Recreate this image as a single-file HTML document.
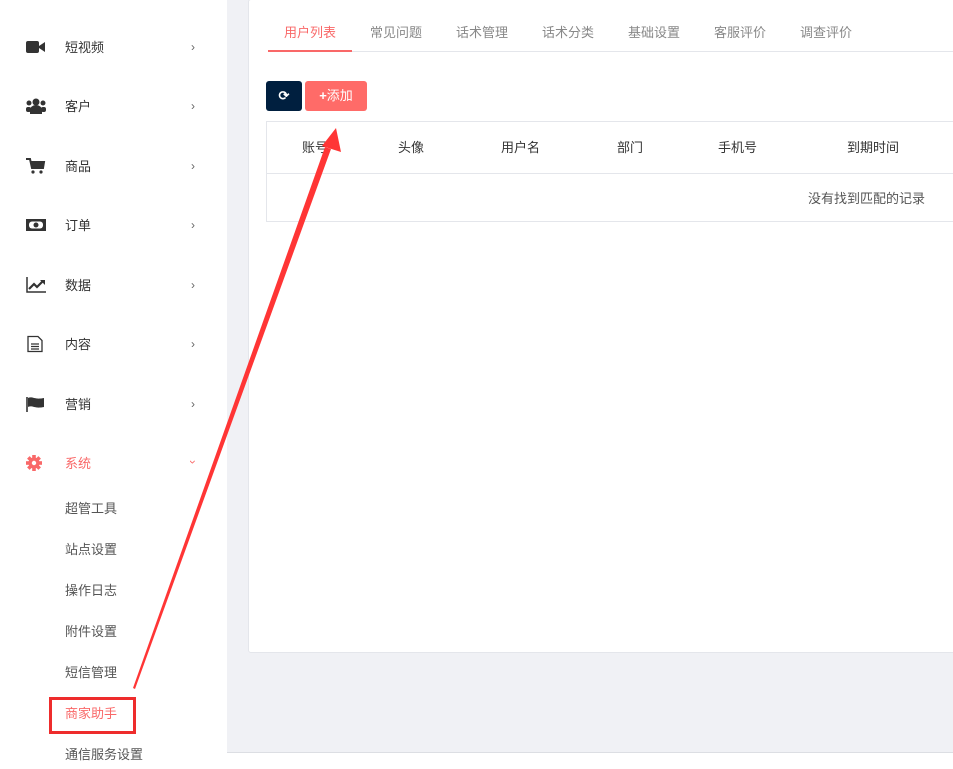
<!DOCTYPE html>
<html><head><meta charset="utf-8"><style>
*{margin:0;padding:0;box-sizing:border-box}
body{width:953px;height:769px;overflow:hidden;background:#f0f1f5;font-family:"Liberation Sans","Noto Sans CJK SC",sans-serif;position:relative}
.side{position:absolute;left:0;top:0;width:227px;height:769px;background:#fff}
.it{position:absolute;left:0;width:227px;height:20px;font-size:13px;color:#333}
.it .ic{position:absolute;left:26px;top:2px;width:20px;height:16px}
.it .t{position:absolute;left:65px;top:0}
.it .ar{position:absolute;left:191px;top:3px;color:#666;font-size:12px}
.sub{position:absolute;left:65px;font-size:13px;color:#555}
.card{position:absolute;left:248px;top:-1px;width:720px;height:654px;background:#fff;border-radius:3px;border:1px solid #e4e6eb}
.tabs{position:absolute;left:268px;top:19px;font-size:13px;color:#888}
.tabs span{position:absolute;top:3px;white-space:nowrap}
.foot{position:absolute;left:227px;top:752px;width:726px;height:17px;background:#fff;border-top:1px solid #dcdee3}
</style></head><body>
<div class="side">
<div class="it" style="top:37px"><svg class="ic" viewBox="0 0 20 16"><rect x="0" y="2" width="13" height="12" rx="2" fill="#333"/><path d="M13 7l6-4v10l-6-4z" fill="#333"/></svg><span class="t">短视频</span><span class="ar">›</span></div>
<div class="it" style="top:96px"><svg class="ic" viewBox="0 0 20 16"><circle cx="10" cy="4" r="3.5" fill="#333"/><circle cx="3" cy="5" r="2.5" fill="#333"/><circle cx="17" cy="5" r="2.5" fill="#333"/><path d="M4 16v-4a6 5 0 0112 0v4z" fill="#333"/><rect x="0" y="9" width="5" height="5" rx="2" fill="#333"/><rect x="15" y="9" width="5" height="5" rx="2" fill="#333"/></svg><span class="t">客户</span><span class="ar">›</span></div>
<div class="it" style="top:156px"><svg class="ic" viewBox="0 0 20 16"><path d="M0 1h4l2 9h11l1-6H5" fill="none" stroke="#333" stroke-width="2"/><rect x="5" y="4" width="12" height="5" fill="#333"/><circle cx="7" cy="14" r="1.6" fill="#333"/><circle cx="15" cy="14" r="1.6" fill="#333"/></svg><span class="t">商品</span><span class="ar">›</span></div>
<div class="it" style="top:215px"><svg class="ic" viewBox="0 0 20 16"><rect x="0" y="2" width="20" height="12" fill="#333"/><rect x="3" y="4.5" width="14" height="7" rx="3" fill="#fff"/><circle cx="10" cy="8" r="2.5" fill="#333"/></svg><span class="t">订单</span><span class="ar">›</span></div>
<div class="it" style="top:275px"><svg class="ic" viewBox="0 0 20 16"><path d="M1 0v15h19" fill="none" stroke="#333" stroke-width="1.5"/><path d="M3 12l5-5 3 3 6-6" fill="none" stroke="#333" stroke-width="2.2"/><path d="M14 3h5v5z" fill="#333"/></svg><span class="t">数据</span><span class="ar">›</span></div>
<div class="it" style="top:334px"><svg class="ic" viewBox="0 0 20 16" style="top:1px;height:18px"><path d="M2 0.5h10l4 4v11H2z" fill="none" stroke="#333" stroke-width="1.3"/><path d="M5 8h8M5 10.5h8M5 13h8" stroke="#333" stroke-width="1.2"/></svg><span class="t">内容</span><span class="ar">›</span></div>
<div class="it" style="top:394px"><svg class="ic" viewBox="0 0 20 16"><path d="M1 1v15" stroke="#333" stroke-width="1.6"/><path d="M2 2c5-2 6 2 16 0v9c-10 2-11-2-16 0z" fill="#333"/></svg><span class="t">营销</span><span class="ar">›</span></div>
<div class="it" style="top:453px;color:#f96868"><svg class="ic" viewBox="0 0 20 16"><g transform="translate(8 8)" fill="#f96868"><circle r="5.5"/><rect x="-1.8" y="-8" width="3.6" height="16"/><rect x="-1.8" y="-8" width="3.6" height="16" transform="rotate(45)"/><rect x="-1.8" y="-8" width="3.6" height="16" transform="rotate(90)"/><rect x="-1.8" y="-8" width="3.6" height="16" transform="rotate(135)"/><circle r="2.2" fill="#fff"/></g></svg><span class="t">系统</span><span class="ar" style="color:#f96868;transform:rotate(90deg);left:191px;top:2px">›</span></div>
<div class="sub" style="top:498px">超管工具</div>
<div class="sub" style="top:539px">站点设置</div>
<div class="sub" style="top:580px">操作日志</div>
<div class="sub" style="top:621px">附件设置</div>
<div class="sub" style="top:662px">短信管理</div>
<div class="sub" style="top:703px;color:#f96868">商家助手</div>
<div class="sub" style="top:744px">通信服务设置</div>
</div>
<div class="card"></div>
<div class="tabs">
<span style="left:16px;color:#f96868">用户列表</span>
<span style="left:102px">常见问题</span><span style="left:188px">话术管理</span><span style="left:274px">话术分类</span><span style="left:360px">基础设置</span><span style="left:446px">客服评价</span><span style="left:532px">调查评价</span>
</div>
<div style="position:absolute;left:268px;top:51px;width:685px;height:1px;background:#e4e6eb"></div>
<div style="position:absolute;left:268px;top:50px;width:84px;height:2px;background:#f96868"></div>
<div style="position:absolute;left:266px;top:81px;width:36px;height:30px;background:#001f3f;border-radius:3px;color:#fff;font-size:13px;text-align:center;line-height:30px;font-weight:bold">⟳</div>
<div style="position:absolute;left:305px;top:81px;width:62px;height:30px;background:#ff6b68;border-radius:3px;color:#fff;font-size:13px;text-align:center;line-height:30px"><b>+</b>添加</div>
<div style="position:absolute;left:266px;top:121px;width:700px;height:101px;border:1px solid #e4e6eb"></div>
<div style="position:absolute;left:267px;top:173px;width:690px;height:1px;background:#e4e6eb"></div>
<div style="position:absolute;top:137px;font-size:13px;color:#333;left:0;width:953px">
<span style="position:absolute;left:302px">账号</span><span style="position:absolute;left:398px">头像</span><span style="position:absolute;left:501px">用户名</span><span style="position:absolute;left:617px">部门</span><span style="position:absolute;left:718px">手机号</span><span style="position:absolute;left:847px">到期时间</span>
</div>
<div style="position:absolute;left:808px;top:188px;font-size:13px;color:#555">没有找到匹配的记录</div>
<div class="foot"></div>
<div style="position:absolute;left:49px;top:697px;width:87px;height:37px;border:3px solid #ee2c2c"></div>
<svg style="position:absolute;left:0;top:0" width="953" height="769"><polygon points="133,688 135,689 331,149 325,147" fill="#ff3535"/><polygon points="336,128 341,152 322,146" fill="#ff3535"/></svg>
</body></html>
